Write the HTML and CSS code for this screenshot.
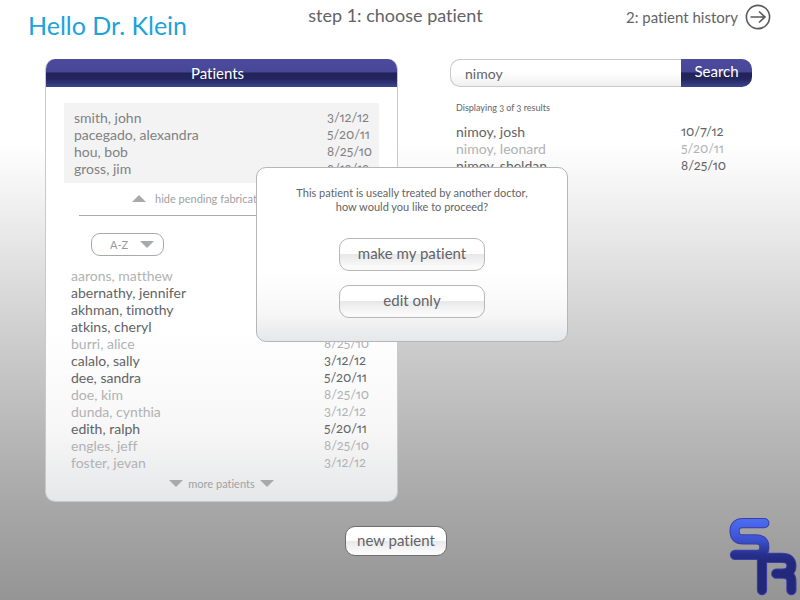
FILE: index.html
```html
<!DOCTYPE html>
<html lang="en">
<head>
<meta charset="utf-8">
<meta name="viewport" content="width=device-width, initial-scale=1">
<title>Choose patient</title>
<link rel="stylesheet" href="styles.css">
</head>
<body>
<header class="top">
  <h1 class="greeting">Hello Dr. Klein</h1>
  <h2 class="step">step 1: choose patient</h2>
  <a class="next" href="#history">2: patient history
    <svg class="next-icon" viewBox="0 0 26 26" aria-hidden="true"><circle cx="13" cy="13" r="11.6"/><path d="M5.5 13H20M14 7.5L20 13L14 18.5"/></svg>
  </a>
</header>

<main class="content">
  <section class="panel">
    <h2 class="panel-title">Patients</h2>
    <div class="panel-body">
      <div class="pending">
        <table class="list">
          <tr><td>smith, john</td><td class="date">3/12/12</td></tr>
          <tr><td>pacegado, alexandra</td><td class="date">5/20/11</td></tr>
          <tr><td>hou, bob</td><td class="date">8/25/10</td></tr>
          <tr><td>gross, jim</td><td class="date">3/12/12</td></tr>
        </table>
      </div>
      <button class="toggle" type="button"><svg class="tri" viewBox="0 0 14 7" aria-hidden="true"><path d="M0 7L7 0L14 7Z"/></svg>hide pending fabrications</button>
      <hr class="rule">
      <div class="sort">
        <select class="sort-select" aria-label="Sort order"><option>A-Z</option><option>Z-A</option></select>
        <svg class="tri sort-tri" viewBox="0 0 14 7" aria-hidden="true"><path d="M0 0L7 7L14 0Z"/></svg>
      </div>
      <table class="list patients">
        <tr class="dim"><td>aarons, matthew</td><td class="date">3/12/12</td></tr>
        <tr><td>abernathy, jennifer</td><td class="date">5/20/11</td></tr>
        <tr><td>akhman, timothy</td><td class="date">8/25/10</td></tr>
        <tr><td>atkins, cheryl</td><td class="date">5/20/11</td></tr>
        <tr class="dim"><td>burri, alice</td><td class="date">8/25/10</td></tr>
        <tr><td>calalo, sally</td><td class="date">3/12/12</td></tr>
        <tr><td>dee, sandra</td><td class="date">5/20/11</td></tr>
        <tr class="dim"><td>doe, kim</td><td class="date">8/25/10</td></tr>
        <tr class="dim"><td>dunda, cynthia</td><td class="date">3/12/12</td></tr>
        <tr><td>edith, ralph</td><td class="date">5/20/11</td></tr>
        <tr class="dim"><td>engles, jeff</td><td class="date">8/25/10</td></tr>
        <tr class="dim"><td>foster, jevan</td><td class="date">3/12/12</td></tr>
      </table>
      <button class="more" type="button"><svg class="tri" viewBox="0 0 14 7" aria-hidden="true"><path d="M0 0L7 7L14 0Z"/></svg>more patients<svg class="tri" viewBox="0 0 14 7" aria-hidden="true"><path d="M0 0L7 7L14 0Z"/></svg></button>
    </div>
  </section>

  <section class="finder">
    <form class="search">
      <input class="search-box" type="text" value="nimoy" aria-label="Search patients">
      <button class="search-button" type="button">Search</button>
    </form>
    <p class="count">Displaying 3 of 3 results</p>
    <table class="list results">
      <tr><td>nimoy, josh</td><td class="date">10/7/12</td></tr>
      <tr class="dim"><td>nimoy, leonard</td><td class="date">5/20/11</td></tr>
      <tr><td>nimoy, sheldan</td><td class="date">8/25/10</td></tr>
    </table>
  </section>
</main>

<footer class="bottom">
  <button class="glossy new-patient" type="button">new patient</button>
</footer>

<svg class="logo" viewBox="87 52 206 236" role="img" aria-label="SR">
  <defs>
    <linearGradient id="blue" gradientUnits="userSpaceOnUse" x1="0" y1="60" x2="0" y2="190">
      <stop offset="0" stop-color="#4a6cf0"/><stop offset=".45" stop-color="#3b52d0"/><stop offset=".8" stop-color="#27308c"/><stop offset="1" stop-color="#22297a"/>
    </linearGradient>
    <path id="s" d="M194 69H129Q104 69 104 93Q104 118 129 118H169Q194 118 194 142Q194 165 171 165H105"/>
    <path id="r" d="M187 272V174H248Q276 174 276 198Q276 222 248 222H230M248 222Q276 222 276 245V272"/>
  </defs>
  <g class="logo-edge"><use href="#r"/><use href="#s"/></g>
  <g class="logo-fill"><use href="#r"/><use href="#s"/></g>
</svg>

<div class="dialog" role="dialog" aria-labelledby="question">
  <p class="question" id="question">This patient is useally treated by another doctor,<br>how would you like to proceed?</p>
  <button class="glossy choice" type="button">make my patient</button>
  <button class="glossy choice" type="button">edit only</button>
</div>
</body>
</html>
```
FILE: styles.css
```css
* { box-sizing: border-box; }

body {
  margin: 0;
  min-height: 100vh;
  position: relative;
  font-family: Lato, "Open Sans", sans-serif;
  font-size: 14px;
  line-height: 17px;
  font-variant-ligatures: none;
  color: #626366;
  background: linear-gradient(#fff 0, #fff 24%, #ededed 36%, #cbcbcb 58%, #a9a9a9 83%, #959595 100%) no-repeat;
}

h1, h2, p { margin: 0; font-weight: 400; }

button, input, select { font: inherit; font-variant-ligatures: none; color: inherit; }

button { cursor: pointer; padding: 0; border: 0; background: none; }

.top {
  display: grid;
  grid-template-columns: 1fr auto 1fr;
  align-items: start;
  height: 59px;
  padding: 0 29px 0 28px;
}

.greeting { padding-top: 10px; font-size: 25px; line-height: 30px; color: #1ba3dd; }

.step { padding: 4px 8px 0 0; font-size: 18px; line-height: 22px; }

.next {
  display: flex;
  justify-content: flex-end;
  align-items: center;
  gap: 7px;
  padding-top: 4px;
  font-size: 15px;
  line-height: 24px;
  color: inherit;
  text-decoration: none;
}

.next-icon { width: 26px; height: 26px; fill: none; stroke: #58595b; stroke-width: 1.6; }

.content {
  display: grid;
  grid-template-columns: 353fr 302fr;
  gap: 52px;
  align-items: start;
  padding: 0 48px 0 45px;
}

.panel {
  border-radius: 10px;
  overflow: hidden;
  border: 1px solid #c9c9cb;
  border-top: 0;
  background: linear-gradient(#fff 60%, #f7f7f7 84%, #e6e7e9);
}

.panel-title, .search-button {
  color: #fff;
  background: linear-gradient(#4d4b9d 0, #484696 46%, #23235a 50%, #25265e 72%, #3b4590 100%);
}

.panel-title {
  margin: 0 -1px;
  padding-right: 8px;
  font-size: 15px;
  line-height: 28px;
  text-align: center;
}

.panel-body { padding: 16px 18px 9px; }

.list { width: 100%; border-collapse: collapse; table-layout: fixed; }

.list td { padding: 0; height: 17px; line-height: 17px; white-space: nowrap; }

.list .date { width: 52px; font-size: 13px; font-variant-numeric: oldstyle-nums proportional-nums; }

.dim { color: #b0b2b4; }

.pending { padding: 6px 0 6px 10px; background: #f3f3f3; color: #808183; }

.toggle, .more { display: flex; align-items: center; color: #9fa1a3; font-size: 11px; }

.toggle { gap: 9px; margin: 7px 0 8px 68px; }

.tri { width: 14px; height: 7px; fill: #a7a9ab; }

.rule { margin: 0 13px 0 15px; border: 0; border-top: 1px solid #a7a9ab; }

.sort { position: relative; width: 73px; margin: 17px 0 11px 27px; }

.sort-select {
  display: block;
  width: 100%;
  height: 23px;
  padding: 0 0 0 18px;
  appearance: none;
  border: 1px solid #a7a9ab;
  border-radius: 9px;
  background: #fff;
  color: #97999b;
  font-size: 11px;
}

.sort-tri { position: absolute; top: 8px; right: 10px; pointer-events: none; }

.patients { width: auto; margin: 0 3px 0 7px; min-width: calc(100% - 10px); }

.more { justify-content: center; gap: 5px; margin: 4px auto 0; }

.search { display: flex; height: 28px; }

.search-box {
  flex: 1;
  min-width: 0;
  padding: 0 14px;
  border: 1px solid #c9c9cb;
  border-right: 0;
  border-radius: 10px 0 0 10px;
  background: linear-gradient(#fff 50%, #efeff0);
}

.search-button { width: 71px; padding-bottom: 3px; border-radius: 0 10px 10px 0; font-size: 15px; }

.count { margin: 12px 6px 7px; font-size: 9px; font-variant-numeric: oldstyle-nums; }

.results { width: 100%; }

.results td:first-child { padding-left: 6px; }

.results .date { width: 71px; }

.bottom { display: flex; justify-content: center; padding: 24px 8px 44px 0; }

.glossy {
  padding-bottom: 2px;
  border: 1px solid #b4b6b8;
  border-radius: 10px;
  background: linear-gradient(#fff 48%, #e8e8ea 50%, #fafafa 90%);
}

.new-patient { width: 102px; height: 30px; border-color: #6d6e71; font-size: 15px; }

.logo { position: absolute; right: 3px; bottom: 4px; width: 68px; height: 79px; }

.logo-edge, .logo-fill { fill: none; stroke-linecap: round; stroke-linejoin: round; }

.logo-edge { stroke: #3d3da6; stroke-width: 31px; }

.logo-fill { stroke: url(#blue); stroke-width: 25px; }

.dialog {
  position: absolute;
  top: 167px;
  left: calc(50% + 12px);
  transform: translateX(-50%);
  width: 312px;
  display: flex;
  flex-direction: column;
  align-items: center;
  gap: 14px;
  padding: 18px 16px 23px;
  border: 1px solid #b4b6b8;
  border-radius: 10px;
  background: linear-gradient(#fff 60%, #f7f7f7 84%, #e6e7e9);
}

.question { margin-bottom: 10px; font-size: 11px; line-height: 14px; text-align: center; }

.choice { width: 146px; height: 33px; font-size: 15px; }
```
